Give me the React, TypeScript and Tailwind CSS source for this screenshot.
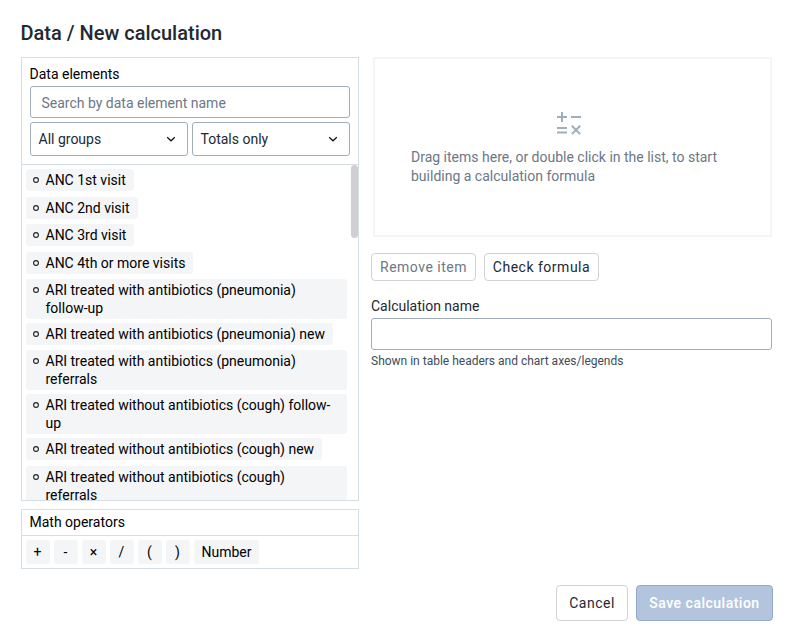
import type { ReactNode } from 'react'

const dataElements = [
  { name: 'ANC 1st visit', spacing: 'mb-[6px]' },
  { name: 'ANC 2nd visit', spacing: 'mb-[5px]' },
  { name: 'ANC 3rd visit', spacing: 'mb-[6px]' },
  { name: 'ANC 4th or more visits', spacing: 'mb-[5px]' },
  { name: 'ARI treated with antibiotics (pneumonia) follow-up', spacing: 'mb-1' },
  { name: 'ARI treated with antibiotics (pneumonia) new', spacing: 'mb-[5px]' },
  { name: 'ARI treated with antibiotics (pneumonia) referrals', spacing: 'mb-1' },
  { name: 'ARI treated without antibiotics (cough) follow-up', spacing: 'mb-1' },
  { name: 'ARI treated without antibiotics (cough) new', spacing: 'mb-[6px]' },
  { name: 'ARI treated without antibiotics (cough) referrals', spacing: 'mb-1' },
]

const operators = ['+', '-', '×', '/', '(', ')']

function Select({ label }: { label: string }) {
  return (
    <button className="flex h-[34px] flex-1 items-center justify-between rounded-[3px] border border-[#a0adba] pr-[11px] pl-[7.5px] text-[#212934]">
      <span>{label}</span>
      <svg width="10" height="6" viewBox="0 0 10 6" fill="none" stroke="#111" strokeWidth="1.2">
        <path d="M1.2 1.2L5 4.8l3.8-3.6" />
      </svg>
    </button>
  )
}

function DataElement({ name, spacing }: { name: string; spacing: string }) {
  return (
    <div className={`flex w-fit max-w-[321px] shrink-0 rounded-[3px] bg-[#f3f5f7] pt-[2px] pr-2 pb-[2px] pl-[7px] leading-[18px] text-black ${spacing}`}>
      <svg className="mt-[6px] mr-[6.5px] shrink-0" width="6" height="6" viewBox="0 0 6 6" fill="none" stroke="#222" strokeWidth="1.1">
        <circle cx="3" cy="3" r="2.4" />
      </svg>
      <span>{name}</span>
    </div>
  )
}

function SmallButton({ children, className }: { children: ReactNode; className: string }) {
  return (
    <button className={`h-7 rounded border border-[#cfd4d9] tracking-[0.5px] ${className}`}>
      {children}
    </button>
  )
}

export default function App() {
  return (
    <div className="h-[642px] w-[793px] overflow-hidden bg-white pl-[21px] font-[Roboto,sans-serif] text-sm text-black">
      <h1 className="-ml-[0.5px] pt-[21px] text-xl leading-6 font-medium text-[#212934]">Data / New calculation</h1>
      <main className="mt-3 flex">
        <section className="w-[338px]">
          <div className="flex h-[444px] flex-col border border-[#d5dde5]">
            <div className="h-[107px] shrink-0 border-b border-[#d5dde5] px-2 pt-2">
              <h2 className="-ml-[0.5px] leading-4">Data elements</h2>
              <input
                className="mt-1 block h-8 w-full rounded-[3px] border border-[#a0adba] px-[10.5px] pt-[2px] placeholder:text-[#6c7787] placeholder:opacity-100"
                placeholder="Search by data element name"
              />
              <div className="mt-1 flex gap-1">
                <Select label="All groups" />
                <Select label="Totals only" />
              </div>
            </div>
            <div className="flex min-h-0 flex-1 justify-between overflow-hidden">
              <div className="pt-1 pl-1">
                {dataElements.map((item) => (
                  <DataElement key={item.name} {...item} />
                ))}
              </div>
              <div className="h-[73px] w-[7px] shrink-0 rounded-full bg-[#cfcfd1]" />
            </div>
          </div>
          <div className="mt-2 h-[60px] border border-[#d5dde5]">
            <h2 className="h-[26px] border-b border-[#d5dde5] pl-[7.5px] leading-[25px]">Math operators</h2>
            <div className="flex gap-1 pt-1 pl-1">
              {operators.map((operator) => (
                <button key={operator} className="h-6 w-6 rounded-[3px] bg-[#f3f5f7] pr-px">
                  {operator}
                </button>
              ))}
              <button className="h-6 w-[65px] rounded-[3px] bg-[#f3f5f7]">Number</button>
            </div>
          </div>
        </section>
        <section className="ml-3 w-[401px]">
          <div className="ml-[2px] h-[180px] border-2 border-[#f3f5f6] pt-[53px] text-[#6c7787]">
            <svg className="ml-[182px]" width="26" height="24" viewBox="0 0 26 24" fill="none" stroke="#a0adba" strokeWidth="2">
              <path d="M0 5h10M5 0v10M14 5h10M0 16h10M0 20.5h10M14.8 13.7l8.4 8.4M23.2 13.7l-8.4 8.4" />
            </svg>
            <p className="mt-[12px] ml-9 w-[320px] leading-[19px]">
              Drag items here, or double click in the list, to start building a calculation formula
            </p>
          </div>
          <div className="mt-4 flex gap-2">
            <SmallButton className="w-[105px] text-[#6c7787]">Remove item</SmallButton>
            <SmallButton className="w-[115px] text-[#212934]">Check formula</SmallButton>
          </div>
          <label className="mt-[17px] block leading-4 text-[#212934]">
            Calculation name
            <input className="mt-1 block h-8 w-full rounded-[3px] border border-[#a0adba] px-[11px]" />
          </label>
          <p className="mt-1 text-xs leading-[14px] text-[#404b5a]">Shown in table headers and chart axes/legends</p>
        </section>
      </main>
      <footer className="mt-4 flex justify-end gap-2 pr-5">
        <button className="h-9 w-[72px] rounded border border-[#cfd4d9] tracking-[0.5px] text-[#212934]">Cancel</button>
        <button className="h-9 w-[137px] rounded border border-[#93a9c8] bg-[#b3c5de] font-medium tracking-[0.5px] text-white">
          Save calculation
        </button>
      </footer>
    </div>
  )
}
